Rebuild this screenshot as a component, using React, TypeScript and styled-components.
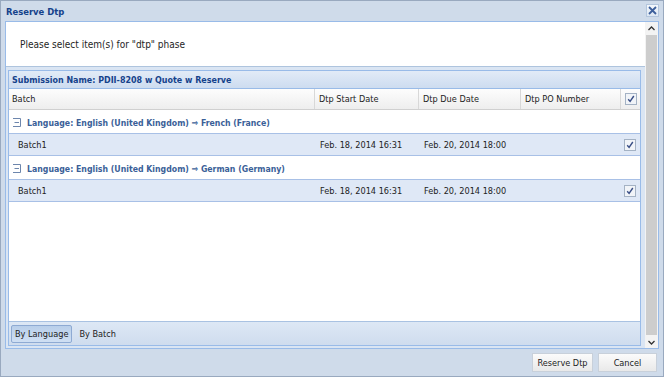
import styled, { createGlobalStyle } from "styled-components";

const GlobalStyle = createGlobalStyle`
  html, body {
    margin: 0;
    padding: 0;
  }
  body {
    font-family: "DejaVu Sans Condensed", "Liberation Sans", sans-serif;
    font-size: 9.1px;
    color: #000;
    background: #fff;
  }
`;

const Window = styled.div`
  width: 664px;
  height: 377px;
  box-sizing: border-box;
  border: 1px solid #99a9bf;
  background: #cfdbea;
  display: flex;
  flex-direction: column;
`;

const TitleBar = styled.div`
  height: 20px;
  display: flex;
  align-items: center;
  justify-content: space-between;
  padding: 0 4px 0 5px;
  font-weight: bold;
  font-size: 9.4px;
  color: #15428b;
`;

const CloseTool = styled.div`
  width: 13px;
  height: 13px;
  margin-top: -2px;
  box-sizing: border-box;
  border: 1px solid #b4c6dd;
  background: linear-gradient(#f4f8fc, #dde7f3);
  display: flex;
  align-items: center;
  justify-content: center;
`;

const Body = styled.div`
  height: 328px;
  margin: 0 4px;
  box-sizing: border-box;
  border: 1px solid #99bbe8;
  background: #fff;
  display: flex;
`;

const Content = styled.div`
  flex: 1;
  display: flex;
  flex-direction: column;
`;

const Message = styled.div`
  height: 44px;
  display: flex;
  align-items: center;
  padding-left: 14px;
  font-size: 10px;
  color: #1e1e1e;
`;

const GridFrame = styled.div`
  flex: 1;
  border-top: 1px solid #aec4de;
  background: #dae5f3;
  padding: 3px 4px 2px 2px;
  display: flex;
`;

const Grid = styled.div`
  flex: 1;
  border: 1px solid #99bbe8;
  background: #fff;
  display: flex;
  flex-direction: column;
`;

const GridTitle = styled.div`
  height: 17px;
  border-bottom: 1px solid #99bbe8;
  background: linear-gradient(#e2ebf7, #cddcf0);
  display: flex;
  align-items: center;
  padding-left: 3px;
  font-weight: bold;
  font-size: 8.9px;
  color: #15428b;
`;

const Row = styled.div`
  display: grid;
  grid-template-columns: 305px 104px 102px 100px 1fr;
`;

const HeadRow = styled(Row)`
  height: 20px;
  border-bottom: 1px solid #d0d0d0;
  background: linear-gradient(#fdfdfd, #eeeeee);
`;

const HeadCell = styled.div<{ $first?: boolean; $center?: boolean }>`
  display: flex;
  align-items: center;
  justify-content: ${(p) => (p.$center ? "center" : "flex-start")};
  padding-left: ${(p) => (p.$center ? "0" : p.$first ? "3px" : "4px")};
  border-left: ${(p) => (p.$first ? "none" : "1px solid #d8d8d8")};
  color: #222;
`;

const GroupRow = styled.div`
  height: 23px;
  display: flex;
  align-items: center;
  gap: 6px;
  padding: 2px 0 0 3px;
  box-sizing: border-box;
  font-weight: bold;
  font-size: 8.7px;
  color: #3b5f98;
`;

const DataRow = styled(Row)`
  height: 21px;
  border-top: 1px solid #a8c0e6;
  border-bottom: 1px solid #a8c0e6;
  background: #dfe8f6;
`;

const Cell = styled.div<{ $first?: boolean; $center?: boolean }>`
  display: flex;
  align-items: center;
  justify-content: ${(p) => (p.$center ? "center" : "flex-start")};
  padding-left: ${(p) => (p.$center ? "0" : p.$first ? "9px" : "6px")};
  color: #222;
  white-space: nowrap;
`;

const GridSpacer = styled.div`
  flex: 1;
`;

const Toolbar = styled.div`
  height: 23px;
  border-top: 1px solid #a9c2e2;
  background: linear-gradient(#dde8f5, #cfdcee);
  display: flex;
  align-items: center;
  gap: 3px;
  padding-left: 2px;
`;

const ToggleButton = styled.div<{ $pressed?: boolean }>`
  height: 18px;
  box-sizing: border-box;
  padding: 0 3px;
  display: flex;
  align-items: center;
  border-radius: 2px;
  color: #222;
  border: 1px solid ${(p) => (p.$pressed ? "#8eaad3" : "transparent")};
  background: ${(p) =>
    p.$pressed ? "linear-gradient(#b9cfea, #cfdff3)" : "transparent"};
`;

const Scrollbar = styled.div`
  width: 13px;
  display: flex;
  flex-direction: column;
  background: #f3f3f3;
`;

const ScrollArrow = styled.div`
  height: 12px;
  display: flex;
  align-items: center;
  justify-content: center;
`;

const ScrollThumb = styled.div`
  flex: 1;
  margin: 1px 1px;
  background: #cdcdcd;
`;

const Footer = styled.div`
  flex: 1;
  display: flex;
  justify-content: flex-end;
  align-items: center;
  gap: 5px;
  padding-right: 6px;
`;

const FooterButton = styled.div<{ $width: number }>`
  width: ${(p) => p.$width}px;
  height: 19px;
  box-sizing: border-box;
  border: 1px solid #c8d0da;
  background: linear-gradient(#fbfbfb, #e9e9e9);
  display: flex;
  align-items: center;
  justify-content: center;
  color: #222;
`;

const Check = () => (
  <svg width="12" height="12" viewBox="0 0 12 12">
    <rect x="0.5" y="0.5" width="11" height="11" fill="#f1f4f8" stroke="#a4b2c4" />
    <path d="M3.2 6.2 L5.1 8.4 L8.8 3" fill="none" stroke="#3a4f86" strokeWidth="1.4" />
  </svg>
);

const CollapseIcon = () => (
  <svg width="9" height="9" viewBox="0 0 9 9">
    <path d="M1 0.5 H8.5 V8.5 H1" fill="none" stroke="#6d86ad" />
    <path d="M2.5 4.5 H7" stroke="#6d86ad" />
  </svg>
);

const groups = [
  { target: "French (France)" },
  { target: "German (Germany)" },
];

export default function App() {
  return (
    <>
      <GlobalStyle />
      <Window>
        <TitleBar>
          <span>Reserve Dtp</span>
          <CloseTool>
            <svg width="9" height="9" viewBox="0 0 9 9">
              <path d="M1 1 L8 8 M8 1 L1 8" stroke="#3d5f9c" strokeWidth="1.8" />
            </svg>
          </CloseTool>
        </TitleBar>
        <Body>
          <Content>
            <Message>Please select item(s) for "dtp" phase</Message>
            <GridFrame>
              <Grid>
                <GridTitle>Submission Name: PDII-8208 w Quote w Reserve</GridTitle>
                <HeadRow>
                  <HeadCell $first>Batch</HeadCell>
                  <HeadCell>Dtp Start Date</HeadCell>
                  <HeadCell>Dtp Due Date</HeadCell>
                  <HeadCell>Dtp PO Number</HeadCell>
                  <HeadCell $center>
                    <Check />
                  </HeadCell>
                </HeadRow>
                {groups.map((g) => (
                  <div key={g.target}>
                    <GroupRow>
                      <CollapseIcon />
                      <span>Language: English (United Kingdom) ⇒ {g.target}</span>
                    </GroupRow>
                    <DataRow>
                      <Cell $first>Batch1</Cell>
                      <Cell>Feb. 18, 2014 16:31</Cell>
                      <Cell>Feb. 20, 2014 18:00</Cell>
                      <Cell></Cell>
                      <Cell $center>
                        <Check />
                      </Cell>
                    </DataRow>
                  </div>
                ))}
                <GridSpacer />
                <Toolbar>
                  <ToggleButton $pressed>By Language</ToggleButton>
                  <ToggleButton>By Batch</ToggleButton>
                </Toolbar>
              </Grid>
            </GridFrame>
          </Content>
          <Scrollbar>
            <ScrollArrow>
              <svg width="7" height="5" viewBox="0 0 7 5">
                <path d="M0.5 4 L3.5 1 L6.5 4" fill="none" stroke="#333" strokeWidth="1.3" />
              </svg>
            </ScrollArrow>
            <ScrollThumb />
            <ScrollArrow>
              <svg width="7" height="5" viewBox="0 0 7 5">
                <path d="M0.5 1 L3.5 4 L6.5 1" fill="none" stroke="#333" strokeWidth="1.3" />
              </svg>
            </ScrollArrow>
          </Scrollbar>
        </Body>
        <Footer>
          <FooterButton $width={61}>Reserve Dtp</FooterButton>
          <FooterButton $width={59}>Cancel</FooterButton>
        </Footer>
      </Window>
    </>
  );
}
